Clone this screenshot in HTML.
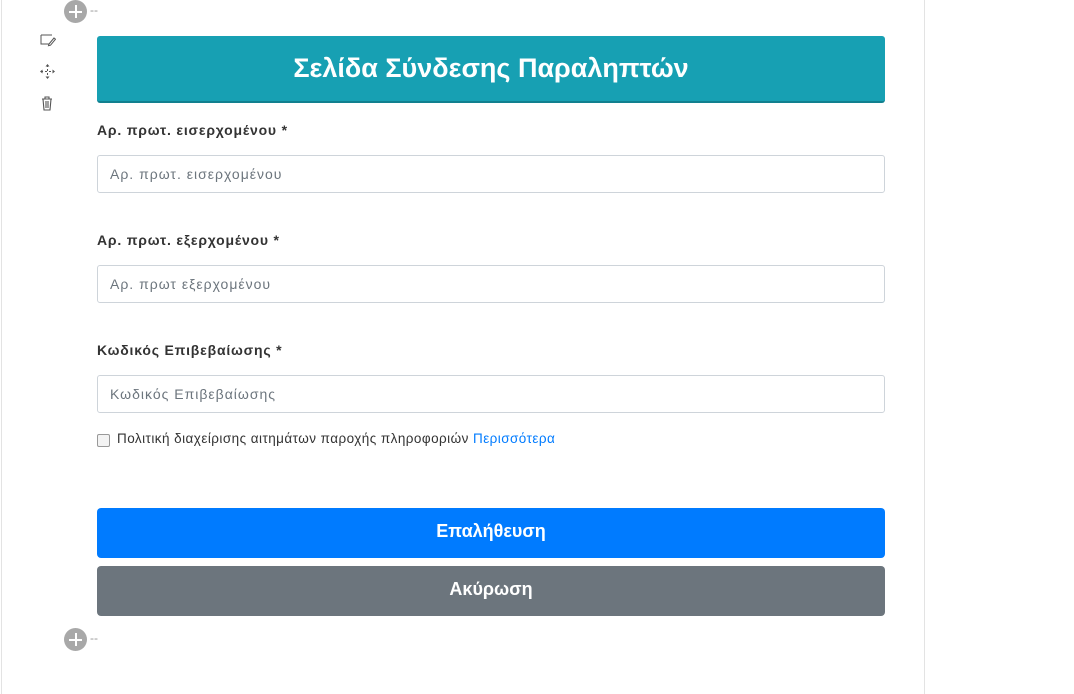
<!DOCTYPE html>
<html><head><meta charset="utf-8"><style>
body{margin:0;width:1074px;height:694px;background:#fff;font-family:"Liberation Sans","DejaVu Sans",sans-serif;position:relative;overflow:hidden;color:#333}
.vl{position:absolute;top:0;bottom:0;width:1px;background:#e3e3e3}
.plus{position:absolute;left:64px;width:23px;height:23px;border-radius:50%;background:#a8a8a8}
.plus:before{content:"";position:absolute;left:5px;top:10.5px;width:13px;height:2px;background:#fff}
.plus:after{content:"";position:absolute;top:5px;left:10.5px;height:13px;width:2px;background:#fff}
.dash{position:absolute;left:90px;font-size:12px;color:#999}
.hdr{position:absolute;left:97px;top:36px;width:788px;height:65px;background:#17a0b3;border-bottom:2px solid #11808f;border-radius:3px;color:#fff;font-weight:bold;font-size:27px;text-align:center;line-height:64px}
.lbl{position:absolute;left:97px;font-size:14px;font-weight:bold;color:#333;letter-spacing:.8px}
.inp{position:absolute;left:97px;height:36px;border:1px solid #ced4da;border-radius:3px;font-size:14px;color:#6c757d;line-height:36px;box-sizing:content-box;padding-left:12px;width:774px;letter-spacing:1px}
.btn{position:absolute;left:97px;width:788px;height:50px;border-radius:4px;color:#fff;font-weight:bold;font-size:18px;text-align:center;line-height:46px}
</style></head><body>
<div class="vl" style="left:1px"></div><div class="vl" style="left:924px"></div>
<div class="plus" style="top:0"></div><div class="dash" style="top:3px">--</div>
<div class="plus" style="top:628px"></div><div class="dash" style="top:631px">--</div>
<svg style="position:absolute;left:40px;top:33px" width="16" height="14" viewBox="0 0 16 14" fill="none" stroke="#555" stroke-width="1"><path d="M1 2h11M1 2v9h8"/><path d="M9 11l5-6 1.5 1.2-5 6-2 .5z"/></svg>
<svg style="position:absolute;left:40px;top:64px" width="15" height="15" viewBox="0 0 15 15" fill="#555" stroke="#555" stroke-width="1"><path d="M7.5 1v13M1 7.5h13" stroke-dasharray="2 2"/><path d="M7.5 0l2 2.5h-4zM7.5 15l2-2.5h-4zM0 7.5l2.5-2v4zM15 7.5l-2.5-2v4z" stroke="none"/></svg>
<svg style="position:absolute;left:41px;top:96px" width="12" height="15" viewBox="0 0 12 15" fill="none" stroke="#555" stroke-width="1.1"><path d="M1 3h10M4 3V1h4v2M2 3l1 11h6l1-11M5 5v7M7 5v7"/></svg>
<div class="hdr">Σελίδα Σύνδεσης Παραληπτών</div>
<div class="lbl" style="top:122px">Αρ. πρωτ. εισερχομένου *</div>
<div class="inp" style="top:155px">Αρ. πρωτ. εισερχομένου</div>
<div class="lbl" style="top:232px">Αρ. πρωτ. εξερχομένου *</div>
<div class="inp" style="top:265px">Αρ. πρωτ εξερχομένου</div>
<div class="lbl" style="top:342px">Κωδικός Επιβεβαίωσης *</div>
<div class="inp" style="top:375px">Κωδικός Επιβεβαίωσης</div>
<div style="position:absolute;left:97px;top:434px;width:11px;height:11px;border:1px solid #999;border-radius:2px;background:#f3f3f3"></div>
<div style="position:absolute;left:117px;top:431px;font-size:13.5px;letter-spacing:.45px;color:#333">Πολιτική διαχείρισης αιτημάτων παροχής πληροφοριών <span style="color:#007bff">Περισσότερα</span></div>
<div class="btn" style="top:508px;background:#007bff">Επαλήθευση</div>
<div class="btn" style="top:566px;background:#6c757d">Ακύρωση</div>
</body></html>
